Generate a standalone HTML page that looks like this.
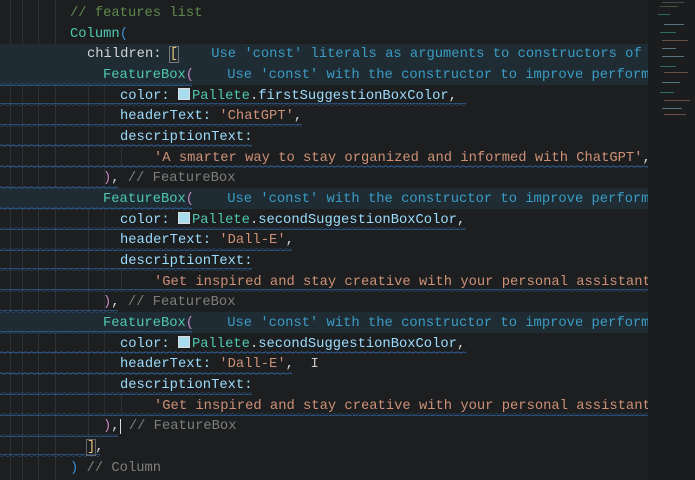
<!DOCTYPE html>
<html><head><style>
html,body{margin:0;padding:0;}
body{width:695px;height:480px;background:#1c1e1f;overflow:hidden;position:relative;font-family:"Liberation Mono",monospace;font-size:13.8px;}
.ed{position:absolute;left:0;top:0;width:648px;height:480px;overflow:hidden;}
.hl{position:absolute;left:0;width:648px;height:20.6px;background:#1f2c34;}
.l{position:absolute;white-space:pre;height:20.6px;line-height:20.6px;color:#d4d4d4;margin-top:2px;}
.cm{color:#5f8a4f}.cg{color:#7e7e7e}.ty{color:#4ec9b0}.pa{color:#c586c0}.pb{color:#3d8fd6}.br{color:#e5c07b}
.k{color:#9cdcfe}.s{color:#ce9178}.h{color:#3a9cc4}.g{color:#4ec9b0}.w{color:#d4d4d4}
.sw{display:inline-block;width:10px;height:10px;background:#a9dcef;border:1px solid #ddd;vertical-align:-1px;margin-right:2px}
.ig{position:absolute;width:1px;background:#2f3234;top:0;height:480px}
.mm{position:absolute;left:648px;top:0;width:47px;height:480px;background:#1a1c1d;}
.mm i{position:absolute;height:1px;display:block;opacity:0.45}
</style></head><body>
<div class="ed">
<div class="ig" style="left:10px"></div><div class="ig" style="left:22px"></div><div class="ig" style="left:38px"></div><div class="ig" style="left:55px"></div>
<div class="ig" style="left:88px;top:64px;height:375px"></div>
<div class="ig" style="left:104px;top:85px;height:330px;background:#2a2d2f"></div>
<div class="ig" style="left:121px;top:146px;height:20px"></div>
<div class="ig" style="left:121px;top:270px;height:20px"></div>
<div class="ig" style="left:121px;top:394px;height:20px"></div>
<div class="hl" style="top:44px"></div>
<div class="hl" style="top:64px"></div>
<div class="hl" style="top:188px"></div>
<div class="hl" style="top:312px"></div>
<svg width="648" height="480" style="position:absolute;left:0;top:0">
<defs><pattern id="wv" width="6" height="3" patternUnits="userSpaceOnUse"><path d="M0 2 Q1.5 0 3 1.5 T6 1" stroke="#2f5f99" stroke-width="1" fill="none"/></pattern></defs>
<g fill="url(#wv)">
<rect x="0" y="83" width="192" height="3"/>
<rect x="0" y="103" width="466" height="3"/>
<rect x="0" y="124" width="302" height="3"/>
<rect x="0" y="144" width="252" height="3"/>
<rect x="0" y="165" width="648" height="3"/>
<rect x="0" y="186" width="118" height="3"/>
<rect x="0" y="207" width="192" height="3"/>
<rect x="0" y="227" width="466" height="3"/>
<rect x="0" y="248" width="292" height="3"/>
<rect x="0" y="268" width="252" height="3"/>
<rect x="0" y="289" width="648" height="3"/>
<rect x="0" y="310" width="118" height="3"/>
<rect x="0" y="331" width="192" height="3"/>
<rect x="0" y="351" width="466" height="3"/>
<rect x="0" y="372" width="292" height="3"/>
<rect x="0" y="392" width="252" height="3"/>
<rect x="0" y="413" width="648" height="3"/>
<rect x="0" y="434" width="118" height="3"/>
<rect x="0" y="454" width="100" height="3"/>
</g></svg>
<div class="l" style="left:70px;top:2px"><span class="cm">// features list</span></div>
<div class="l" style="left:70px;top:23px"><span class="ty">Column</span><span class="pb">(</span></div>
<div class="l" style="left:87px;top:43px"><span class="k" style="color:#d4d4d4">children: </span><span class="br" style="outline:1px solid #777">[</span>    <span class="h">Use 'const' literals as arguments to constructors of</span></div>
<div class="l" style="left:103px;top:64px"><span class="ty">FeatureBox</span><span class="pa">(</span>    <span class="h">Use 'const' with the constructor to improve performance</span></div>
<div class="l" style="left:120px;top:85px"><span class="k">color: </span><span class="sw"></span><span class="g">Pallete</span>.<span class="k">firstSuggestionBoxColor</span>,</div>
<div class="l" style="left:120px;top:105px"><span class="k">headerText: </span><span class="s">'ChatGPT'</span>,</div>
<div class="l" style="left:120px;top:126px"><span class="k">descriptionText:</span></div>
<div class="l" style="left:154px;top:147px"><span class="s">'A smarter way to stay organized and informed with ChatGPT'</span>,</div>
<div class="l" style="left:103px;top:167px"><span class="pa">)</span>, <span class="cg">// FeatureBox</span></div>
<div class="l" style="left:103px;top:188px"><span class="ty">FeatureBox</span><span class="pa">(</span>    <span class="h">Use 'const' with the constructor to improve performance</span></div>
<div class="l" style="left:120px;top:209px"><span class="k">color: </span><span class="sw"></span><span class="g">Pallete</span>.<span class="k">secondSuggestionBoxColor</span>,</div>
<div class="l" style="left:120px;top:229px"><span class="k">headerText: </span><span class="s">'Dall-E'</span>,</div>
<div class="l" style="left:120px;top:250px"><span class="k">descriptionText:</span></div>
<div class="l" style="left:154px;top:271px"><span class="s">'Get inspired and stay creative with your personal assistant'</span></div>
<div class="l" style="left:103px;top:291px"><span class="pa">)</span>, <span class="cg">// FeatureBox</span></div>
<div class="l" style="left:103px;top:312px"><span class="ty">FeatureBox</span><span class="pa">(</span>    <span class="h">Use 'const' with the constructor to improve performance</span></div>
<div class="l" style="left:120px;top:333px"><span class="k">color: </span><span class="sw"></span><span class="g">Pallete</span>.<span class="k">secondSuggestionBoxColor</span>,</div>
<div class="l" style="left:120px;top:353px"><span class="k">headerText: </span><span class="s">'Dall-E'</span>,  <span style="color:#ccc">I</span></div>
<div class="l" style="left:120px;top:374px"><span class="k">descriptionText:</span></div>
<div class="l" style="left:154px;top:395px"><span class="s">'Get inspired and stay creative with your personal assistant'</span></div>
<div class="l" style="left:103px;top:415px"><span class="pa">)</span>,<span style="border-left:1px solid #ddd"> </span><span class="cg">// FeatureBox</span></div>
<div class="l" style="left:87px;top:436px"><span class="br" style="outline:1px solid #666">]</span>,</div>
<div class="l" style="left:70px;top:457px"><span class="pb">)</span> <span class="cg">// Column</span></div>
</div>
<div class="mm">
<i style="left:14px;top:2px;width:22px;background:#6a8a9a"></i>
<i style="left:12px;top:6px;width:18px;background:#7a9a6a"></i>
<i style="left:10px;top:14px;width:12px;background:#4ec9b0"></i>
<i style="left:16px;top:24px;width:20px;background:#9cdcfe"></i>
<i style="left:12px;top:32px;width:16px;background:#4ec9b0"></i>
<i style="left:14px;top:40px;width:26px;background:#ce9178"></i>
<i style="left:14px;top:48px;width:14px;background:#9cdcfe"></i>
<i style="left:14px;top:56px;width:22px;background:#9cdcfe"></i>
<i style="left:12px;top:66px;width:16px;background:#4ec9b0"></i>
<i style="left:16px;top:72px;width:24px;background:#ce9178"></i>
<i style="left:14px;top:82px;width:18px;background:#9cdcfe"></i>
<i style="left:12px;top:92px;width:14px;background:#4ec9b0"></i>
<i style="left:16px;top:100px;width:26px;background:#ce9178"></i>
<i style="left:14px;top:108px;width:20px;background:#9cdcfe"></i>
<i style="left:16px;top:114px;width:22px;background:#ce9178"></i>
</div>
</body></html>
